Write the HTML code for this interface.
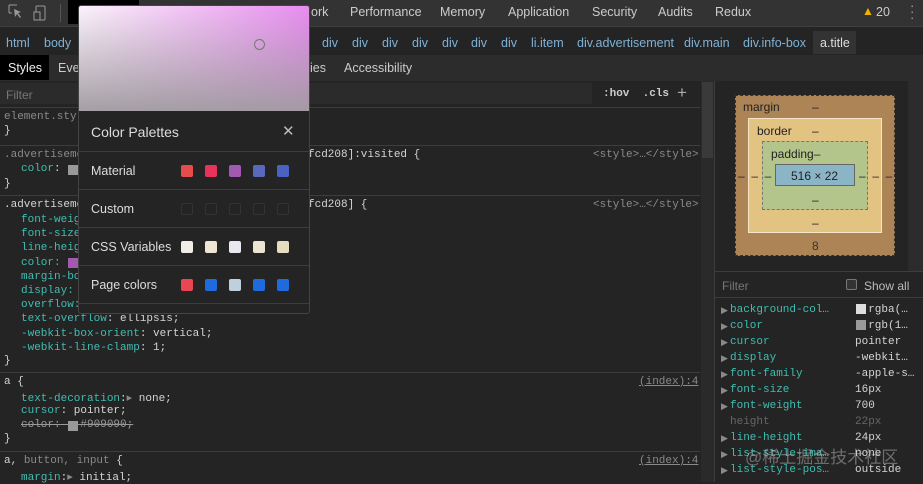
<!DOCTYPE html>
<html><head><meta charset="utf-8"><style>
*{margin:0;padding:0;box-sizing:border-box}
body{width:923px;height:482px;overflow:hidden;background:#242424;font-family:"Liberation Sans",sans-serif;font-size:12px;color:#ccc;position:relative}
.a{position:absolute;white-space:pre}
.m{font-family:"Liberation Mono",monospace;font-size:11px}
.p{color:#3fbdb1}
.v{color:#d4d4d4}
.g{color:#8a8a8a}
.b{color:#7fb1d6;font-size:12.5px;top:36px}
.hr{position:absolute;height:1px;background:#3d3d3d}
.sw{position:absolute;width:12px;height:12px;border-radius:2px}
</style></head><body>
<div class="a" style="left:0;top:0;width:923px;height:26px;background:#333"></div>
<div class="hr" style="left:0;top:26px;width:923px;background:#3f3f3f"></div>
<div class="a" style="left:68px;top:0;width:71px;height:24px;background:#000"></div>
<svg class="a" style="left:8px;top:4px" width="48" height="18"><path d="M1 1h8M1 1v8M1 9h3" stroke="#999" fill="none"/><path d="M6 5l7 3-3 1 3 4-1 1-3-4-2 3z" fill="#999"/><rect x="28" y="2" width="9" height="14" rx="1" stroke="#999" fill="none"/><rect x="26" y="8" width="6" height="8" stroke="#999" fill="#333"/></svg>
<div class="a" style="left:60px;top:4px;width:1px;height:18px;background:#555"></div>
<div class="a" style="left:311px;top:5px;font-size:12.5px">ork</div>
<div class="a" style="left:350px;top:5px;font-size:12.5px">Performance</div>
<div class="a" style="left:440px;top:5px;font-size:12.5px">Memory</div>
<div class="a" style="left:508px;top:5px;font-size:12.5px">Application</div>
<div class="a" style="left:592px;top:5px;font-size:12.5px">Security</div>
<div class="a" style="left:658px;top:5px;font-size:12.5px">Audits</div>
<div class="a" style="left:715px;top:5px;font-size:12.5px">Redux</div>
<div class="a" style="left:862px;top:4px;color:#f0b400;font-size:12px">▲</div>
<div class="a" style="left:876px;top:5px;font-size:12.5px">20</div>
<div class="a" style="left:910px;top:3px;font-size:13px;line-height:6px;color:#aaa">·<br>·<br>·</div>
<div class="a" style="left:813px;top:31px;width:43px;height:23px;background:#333"></div>
<div class="a b" style="left:6px">html</div>
<div class="a b" style="left:44px">body</div>
<div class="a b" style="left:322px">div</div>
<div class="a b" style="left:352px">div</div>
<div class="a b" style="left:382px">div</div>
<div class="a b" style="left:412px">div</div>
<div class="a b" style="left:442px">div</div>
<div class="a b" style="left:471px">div</div>
<div class="a b" style="left:501px">div</div>
<div class="a b" style="left:531px">li.item</div>
<div class="a b" style="left:577px">div.advertisement</div>
<div class="a b" style="left:684px">div.main</div>
<div class="a b" style="left:743px">div.info-box</div>
<div class="a b" style="left:820px;color:#ddd">a.title</div>
<div class="a" style="left:0;top:55px;width:923px;height:26px;background:#2c2c2c"></div>
<div class="a" style="left:0;top:55px;width:49px;height:25px;background:#000"></div>
<div class="a" style="left:8px;top:61px;color:#eee;font-size:12.5px">Styles</div>
<div class="a" style="left:58px;top:61px;font-size:12.5px">Eve</div>
<div class="a" style="left:310px;top:61px;font-size:12.5px">ies</div>
<div class="a" style="left:344px;top:61px;font-size:12.5px">Accessibility</div>
<div class="a" style="left:0;top:83px;width:592px;height:21px;background:#2b2b2b"></div>
<div class="a" style="left:6px;top:88px;color:#777">Filter</div>
<div class="a m" style="left:603px;top:88px;color:#ccc;font-weight:bold">:hov  .cls</div>
<div class="a" style="left:677px;top:83px;color:#aaa;font-size:17px">+</div>
<div class="hr" style="left:0;top:107px;width:700px"></div>
<div class="a" style="left:701px;top:81px;width:13px;height:401px;background:#2a2a2a"></div>
<div class="a" style="left:702px;top:82px;width:11px;height:76px;background:#3a3a3a"></div>
<div class="a" style="left:714px;top:81px;width:1px;height:401px;background:#3d3d3d"></div>
<div class="a m g" style="left:4px;top:111px">element.styl</div>
<div class="a m v" style="left:4px;top:125px">}</div>
<div class="hr" style="left:0;top:145px;width:700px"></div>
<div class="a m g" style="left:4px;top:149px">.advertiseme</div>
<div class="a m v" style="left:308px;top:149px">fcd208]:visited {</div>
<div class="a m g" style="left:593px;top:149px">&lt;style&gt;…&lt;/style&gt;</div>
<div class="a m" style="left:21px;top:163px"><span class="p">color</span><span class="v">: </span></div>
<div class="a" style="left:68px;top:165px;width:10px;height:10px;background:#999"></div>
<div class="a m v" style="left:4px;top:178px">}</div>
<div class="hr" style="left:0;top:195px;width:700px"></div>
<div class="a m v" style="left:4px;top:199px">.advertiseme</div>
<div class="a m v" style="left:308px;top:199px">fcd208] {</div>
<div class="a m g" style="left:593px;top:199px">&lt;style&gt;…&lt;/style&gt;</div>
<div class="a m p" style="left:21px;top:213px;line-height:14.2px">font-weig
font-size
line-heig
color: 
margin-bo
display:
overflow:
text-overflow<span class="v">: ellipsis;</span>
-webkit-box-orient<span class="v">: vertical;</span>
-webkit-line-clamp<span class="v">: 1;</span></div>
<div class="a" style="left:68px;top:258px;width:10px;height:10px;background:#a25ab0"></div>
<div class="a m v" style="left:4px;top:355px">}</div>
<div class="hr" style="left:0;top:372px;width:700px"></div>
<div class="a m v" style="left:4px;top:376px">a {</div>
<div class="a m g" style="left:639px;top:376px;text-decoration:underline">(index):4</div>
<div class="a m p" style="left:21px;top:391px">text-decoration<span class="v">:</span><span class="g">▸</span><span class="v"> none;</span></div>
<div class="a m p" style="left:21px;top:405px">cursor<span class="v">: pointer;</span></div>
<div class="a m" style="left:21px;top:419px;color:#999;text-decoration:line-through">color:   #909090;</div>
<div class="a" style="left:68px;top:421px;width:10px;height:10px;background:#999"></div>
<div class="a m v" style="left:4px;top:433px">}</div>
<div class="hr" style="left:0;top:451px;width:700px"></div>
<div class="a m" style="left:4px;top:455px"><span class="v">a, </span><span class="g">button, input</span><span class="v"> {</span></div>
<div class="a m g" style="left:639px;top:455px;text-decoration:underline">(index):4</div>
<div class="a m p" style="left:21px;top:470px">margin<span class="v">:</span><span class="g">▸</span><span class="v"> initial;</span></div>
<div class="a" style="left:908px;top:81px;width:15px;height:190px;background:#2c2c2c"></div>
<div class="a" style="left:735px;top:95px;width:160px;height:161px;background:#ad8456;border:1px dashed #333"></div>
<div class="a" style="left:743px;top:100px;color:#222">margin</div>
<div class="a" style="left:812px;top:100px;color:#222">–</div>
<div class="a" style="left:748px;top:118px;width:134px;height:115px;background:#e3c382;border:1px solid #f5e6c8"></div>
<div class="a" style="left:757px;top:124px;color:#222">border</div>
<div class="a" style="left:812px;top:124px;color:#222">–</div>
<div class="a" style="left:762px;top:141px;width:106px;height:69px;background:#b3c58a;border:1px dashed #777"></div>
<div class="a" style="left:771px;top:147px;color:#222">padding–</div>
<div class="a" style="left:775px;top:164px;width:80px;height:22px;background:#8bb5c7;border:1px solid #666"></div>
<div class="a" style="left:791px;top:169px;color:#222">516 × 22</div>
<div class="a" style="left:738px;top:169px;color:#222">–  –  –</div>
<div class="a" style="left:859px;top:169px;color:#222">–  –  –</div>
<div class="a" style="left:812px;top:193px;color:#222">–</div>
<div class="a" style="left:812px;top:216px;color:#222">–</div>
<div class="a" style="left:812px;top:239px;color:#333">8</div>
<div class="hr" style="left:715px;top:271px;width:208px"></div>
<div class="a" style="left:722px;top:279px;color:#777">Filter</div>
<div class="a" style="left:846px;top:279px;width:11px;height:11px;border:1px solid #777;border-radius:2px;background:#333"></div>
<div class="a" style="left:864px;top:279px;color:#bbb">Show all</div>
<div class="hr" style="left:715px;top:297px;width:208px"></div>
<div class="a m g" style="left:721px;top:303px;line-height:16px;font-size:9px">▶
▶
▶
▶
▶
▶
▶

▶
▶
▶</div>
<div class="a m p" style="left:730px;top:302px;line-height:16px">background-col…
color
cursor
display
font-family
font-size
font-weight
<span style="color:#666">height</span>
line-height
list-style-ima…
list-style-pos…</div>
<div class="a m v" style="left:855px;top:302px;line-height:16px">  rgba(…
  rgb(1…
pointer
-webkit…
-apple-s…
16px
700
<span style="color:#666">22px</span>
24px
none
outside</div>
<div class="a" style="left:856px;top:304px;width:10px;height:10px;background:#ddd"></div>
<div class="a" style="left:856px;top:320px;width:10px;height:10px;background:#999"></div>
<div class="a" style="left:745px;top:443px;color:rgba(200,200,200,.45);font-size:17px;font-family:'Liberation Sans','Noto Sans CJK SC',sans-serif">@稀土掘金技术社区</div>
<div class="a" style="left:78px;top:5px;width:232px;height:309px;background:#242424;border:1px solid #444;border-radius:3px;overflow:hidden">
<div style="position:absolute;left:0;top:0;width:232px;height:105px;background:linear-gradient(to bottom,rgba(160,160,160,0),rgba(160,155,160,.95)),linear-gradient(to right,#fbf3fb,#e88af0)"></div>
<div style="position:absolute;left:175px;top:33px;width:11px;height:11px;border:1px solid #777;border-radius:50%"></div>
<div style="position:absolute;left:12px;top:118px;color:#ddd;font-size:14px">Color Palettes</div>
<div style="position:absolute;left:203px;top:116px;color:#bbb;font-size:15px">✕</div>
<div class="hr" style="left:0;top:145px;width:232px"></div>
<div style="position:absolute;left:12px;top:158px;color:#ddd;font-size:12.5px">Material</div>
<div class="hr" style="left:0;top:183px;width:232px"></div>
<div style="position:absolute;left:12px;top:196px;color:#ddd;font-size:12.5px">Custom</div>
<div class="hr" style="left:0;top:221px;width:232px"></div>
<div style="position:absolute;left:12px;top:234px;color:#ddd;font-size:12.5px">CSS Variables</div>
<div class="hr" style="left:0;top:259px;width:232px"></div>
<div style="position:absolute;left:12px;top:272px;color:#ddd;font-size:12.5px">Page colors</div>
<div class="hr" style="left:0;top:297px;width:232px"></div>
<div class="sw" style="left:102px;top:159px;background:#e74c4c"></div>
<div class="sw" style="left:126px;top:159px;background:#e8345c"></div>
<div class="sw" style="left:150px;top:159px;background:#a25ab0"></div>
<div class="sw" style="left:174px;top:159px;background:#5b69bc"></div>
<div class="sw" style="left:198px;top:159px;background:#4a62c2"></div>
<div class="sw" style="left:102px;top:197px;border:1px solid #333"></div>
<div class="sw" style="left:126px;top:197px;border:1px solid #333"></div>
<div class="sw" style="left:150px;top:197px;border:1px solid #333"></div>
<div class="sw" style="left:174px;top:197px;border:1px solid #333"></div>
<div class="sw" style="left:198px;top:197px;border:1px solid #333"></div>
<div class="sw" style="left:102px;top:235px;background:#f0ede6"></div>
<div class="sw" style="left:126px;top:235px;background:#eee6d2"></div>
<div class="sw" style="left:150px;top:235px;background:#e8e8ee"></div>
<div class="sw" style="left:174px;top:235px;background:#ece5d2"></div>
<div class="sw" style="left:198px;top:235px;background:#e6dcc0"></div>
<div class="sw" style="left:102px;top:273px;background:#e74652"></div>
<div class="sw" style="left:126px;top:273px;background:#1f6bdc"></div>
<div class="sw" style="left:150px;top:273px;background:#c0cfdc"></div>
<div class="sw" style="left:174px;top:273px;background:#1f6bdc"></div>
<div class="sw" style="left:198px;top:273px;background:#1f6bdc"></div>
</div>
</body></html>
